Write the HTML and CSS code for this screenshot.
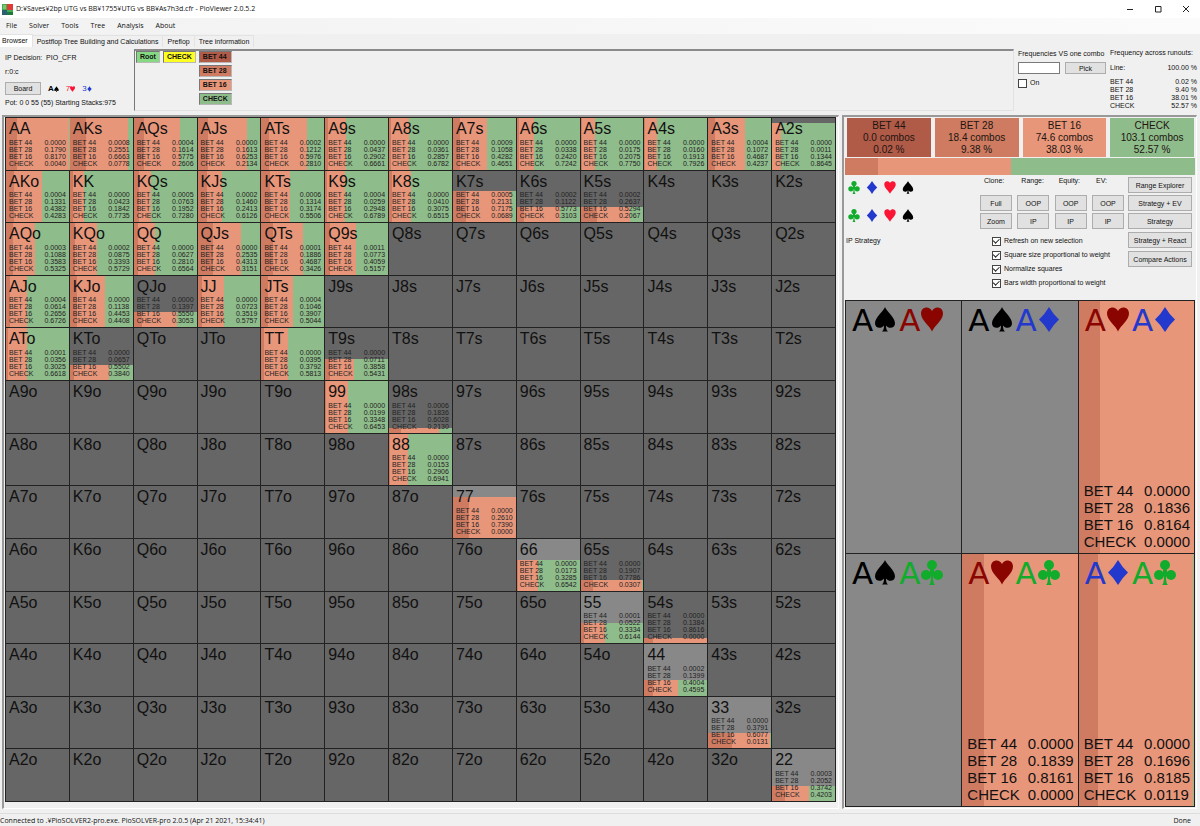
FILE: index.html
```html
<!DOCTYPE html>
<html lang="en">
<head>
<meta charset="utf-8">
<title>PioViewer 2.0.5.2</title>
<link rel="stylesheet" href="styles.css">
</head>
<body>
<svg class="defs" aria-hidden="true">
  <symbol id="spade" viewBox="0 0 22 25"><path d="M11 0C12 4 21 10 21 16.500C21 21 15 22.500 12 18.500C12 21.500 12.500 23.500 14 24.500H8C9.500 23.500 10 21.500 10 18.500C7 22.500 1 21 1 16.500C1 10 10 4 11 0Z"/></symbol>
  <symbol id="heart" viewBox="0 0 22 25"><path d="M11 24.500C9 19 0 13.500 0 6.500C0 -.5 8.500 -1.500 11 4C13.500 -1.500 22 -.5 22 6.500C22 13.500 13 19 11 24.500Z"/></symbol>
  <symbol id="diamond" viewBox="0 0 22 25"><path d="M11 0Q15 7 21 12.500Q15 18 11 25Q7 18 1 12.500Q7 7 11 0Z"/></symbol>
  <symbol id="club" viewBox="0 0 22 25"><circle cx="11" cy="5" r="5"/><circle cx="5" cy="15" r="5"/><circle cx="17" cy="15" r="5"/><path d="M9 8H13L13 13L17 14V17L12 16C12 21 12.500 24 14 25H8C9.500 24 10 21 10 16L5 17V14L9 13Z"/></symbol>
</svg>

<header class="titlebar">
  <svg class="logo" viewBox="0 0 11 11"><path fill="#3fae52" d="M0 0h11v11H0z"/><path fill="#e23b35" d="M5 0h6v6H5z"/><path fill="#2c5f74" d="M0 6h5v5H0z"/><path fill="#7fc46a" d="M1 1h3v4H1z"/><path fill="#1e7a3a" d="M5 8h6v3H5z"/></svg>
  <span class="title">D:¥Saves¥2bp UTG vs BB¥1755¥UTG vs BB¥As7h3d.cfr - PioViewer 2.0.5.2</span>
  <button class="winbtn" aria-label="Minimize"><svg viewBox="0 0 8 8"><path d="M1 4.500H7"/></svg></button>
  <button class="winbtn" aria-label="Maximize"><svg viewBox="0 0 8 8"><path d="M1.500 1.500H7V7H1.500Z"/></svg></button>
  <button class="winbtn" aria-label="Close"><svg viewBox="0 0 8 8"><path d="M1 1L7 7M7 1L1 7"/></svg></button>
</header>

<nav class="menu">
  <button>File</button><button>Solver</button><button>Tools</button><button>Tree</button><button>Analysis</button><button>About</button>
</nav>

<div class="tabs" role="tablist">
  <button role="tab" class="tab active" aria-selected="true">Browser</button>
  <button role="tab" class="tab">Postflop Tree Building and Calculations</button>
  <button role="tab" class="tab">Preflop</button>
  <button role="tab" class="tab">Tree information</button>
</div>

<section class="top">
  <div class="info">
    <p>IP Decision: &nbsp;PIO_CFR</p>
    <p>r:0:c</p>
    <div class="boardrow">
      <button class="btn board">Board</button>
      <span class="bcard black">A<svg><use href="#spade"/></svg></span>
      <span class="bcard red">7<svg><use href="#heart"/></svg></span>
      <span class="bcard blue">3<svg><use href="#diamond"/></svg></span>
    </div>
    <p>Pot: 0 0 55 (55) Starting Stacks:975</p>
  </div>
  <div class="tree">
    <div class="level"><button class="node root">Root</button></div>
    <div class="level"><button class="node current">CHECK</button></div>
    <div class="level">
      <button class="node bet44">BET 44</button>
      <button class="node bet28">BET 28</button>
      <button class="node bet16">BET 16</button>
      <button class="node check">CHECK</button>
    </div>
  </div>
  <div class="combo">
    <label for="combo">Frequencies VS one combo</label>
    <div class="comborow"><input id="combo" type="text"><button class="btn">Pick</button></div>
    <label class="tick"><input type="checkbox">On</label>
  </div>
  <div class="runouts">
    <p>Frequency across runouts:</p>
    <dl class="line"><dt>Line:</dt><dd>100.00 %</dd></dl>
    <dl><dt>BET 44</dt><dd>0.02 %</dd><dt>BET 28</dt><dd>9.40 %</dd><dt>BET 16</dt><dd>38.01 %</dd><dt>CHECK</dt><dd>52.57 %</dd></dl>
  </div>
</section>

<main class="main">
  <section class="panel rangepanel"><div class="range" id="range"></div></section>
  <section class="panel side">
    <div class="actions">
      <button class="bet44">BET 44<br>0.0 combos<br>0.02 %</button>
      <button class="bet28">BET 28<br>18.4 combos<br>9.38 %</button>
      <button class="bet16">BET 16<br>74.6 combos<br>38.03 %</button>
      <button class="check">CHECK<br>103.1 combos<br>52.57 %</button>
    </div>
    <div class="total"><i class="bet28" style="width:9.4%"></i><i class="bet16" style="width:38%"></i><i class="check" style="width:52.6%"></i></div>
    <div class="controls">
      <div class="filters">
        <div class="suits"><svg class="green"><use href="#club"/></svg><svg class="blue"><use href="#diamond"/></svg><svg class="red"><use href="#heart"/></svg><svg class="black"><use href="#spade"/></svg></div>
        <div class="suits"><svg class="green"><use href="#club"/></svg><svg class="blue"><use href="#diamond"/></svg><svg class="red"><use href="#heart"/></svg><svg class="black"><use href="#spade"/></svg></div>
        <p>IP Strategy</p>
      </div>
      <div class="middle">
        <div class="pairs">
          <span>Clone:</span><span>Range:</span><span>Equity:</span><span>EV:</span>
          <button class="btn">Full</button><button class="btn">OOP</button><button class="btn">OOP</button><button class="btn">OOP</button>
          <button class="btn">Zoom</button><button class="btn">IP</button><button class="btn">IP</button><button class="btn">IP</button>
        </div>
        <div class="options">
          <label class="tick"><input type="checkbox" checked>Refresh on new selection</label>
          <label class="tick"><input type="checkbox" checked>Square size proportional to weight</label>
          <label class="tick"><input type="checkbox" checked>Normalize squares</label>
          <label class="tick"><input type="checkbox" checked>Bars width proportional to weight</label>
        </div>
      </div>
      <div class="views">
        <button class="btn">Range Explorer</button>
        <button class="btn">Strategy + EV</button>
        <button class="btn">Strategy</button>
        <button class="btn gap">Strategy + React</button>
        <button class="btn gap">Compare Actions</button>
      </div>
    </div>
    <div class="combos" id="combos"></div>
  </section>
</main>

<footer class="status"><span>Connected to .¥PioSOLVER2-pro.exe. PioSOLVER-pro 2.0.5 (Apr 21 2021, 15:34:41)</span><span>Done</span></footer>
<script src="app.js"></script>
</body>
</html>
```
FILE: styles.css
```css
* { box-sizing: border-box; }
body {
  margin: 0; min-height: 100vh; display: flex; flex-direction: column;
  background: #f0f0f0; color: #111; font: 7px/10px "Liberation Sans", Arial, sans-serif;
}
button, input { font: inherit; color: inherit; margin: 0; padding: 0; border: 0; background: none; }
p, dl, dd { margin: 0; }
.defs { position: absolute; width: 0; height: 0; }
svg { fill: currentColor; }

.bet44 { background: #b05a48; }
.bet28 { background: #ce7b62; }
.bet16 { background: #e8967a; }
.check { background: #8fbc8b; }
.green { color: #12ac2c; }
.blue { color: #2338cc; }
.red { color: #fb1433; }
.black { color: #000; }
.darkred { color: #8b0500; }

.titlebar { display: flex; align-items: center; height: 18px; background: #fff; padding-left: 2px; font-family: "Open Sans", sans-serif; }
.logo { width: 11px; height: 11px; margin-right: 3px; }
.title { flex: 1; }
.winbtn { width: 28px; height: 18px; }
.winbtn svg { width: 8px; height: 8px; display: block; margin: 0 auto; fill: none; stroke: #222; }
.menu { display: flex; gap: 12px; height: 16px; padding-left: 6px; background: linear-gradient(90deg, #f2f2f2, #fbfbfb); font-family: "Open Sans", sans-serif; }
.tabs { display: flex; height: 13px; align-items: flex-end; }
.tab { height: 12px; padding: 0 4px; border: 1px solid #e3e3e3; border-width: 1px 1px 0 0; }
.tab.active { height: 13px; background: #fff; padding: 0 4px 0 2px; }

.btn { border: 1px solid #adadad; background: #e1e1e1; text-align: center; line-height: 9px; }
.tick { display: flex; align-items: center; gap: 3px; }
.tick input { appearance: none; width: 9px; height: 9px; border: 1px solid #444; background: #fff; display: grid; place-items: center; }
.tick input:checked::after { content: ""; width: 5px; height: 3px; border: solid #222; border-width: 0 0 1px 1px; transform: rotate(-45deg) translate(0, -1px); }

.top { display: flex; padding: 2px 3px 0 0; min-height: 68px; }
.info { width: 134px; padding: 4px 0 0 5px; }
.info p { margin-bottom: 4px; white-space: nowrap; }
.boardrow { display: flex; align-items: center; gap: 7px; margin: 5px 0 3px; }
.board { width: 36px; height: 13px; }
.bcard { display: flex; align-items: center; font-size: 8px; }
.bcard.black { font-weight: bold; }
.bcard svg { width: 5px; height: 6px; }
.tree { flex: 1; display: flex; gap: 3px; height: 62px; padding: 0 1px; border: 1px solid #e2e2e2; border-top: 2px solid #8a8a8a; border-left: 1px solid #777; }
.level { display: flex; flex-direction: column; gap: 2px; align-items: stretch; }
.node { height: 12px; padding: 0 3px; border: 1px solid #b8b8b8; border-top-color: #777; border-left-color: #777; font-weight: bold; text-align: left; line-height: 10px; }
.root { background: #86d983; }
.current { background: #ff2; }
.combo { width: 96px; padding: 0 0 0 4px; white-space: nowrap; }
.comborow { display: flex; gap: 5px; margin: 3px 0 4px; }
.comborow input { width: 42px; height: 12px; border: 1px solid #7a7a7a; background: #fff; }
.comborow .btn { width: 41px; height: 12px; }
.runouts { width: 87px; white-space: nowrap; margin-top: -1px; }
.runouts dl { display: grid; grid-template-columns: 1fr auto; line-height: 8px; }
.runouts dd { text-align: right; }
.runouts .line { margin: 6px 0; }

.main { flex: 1; display: grid; grid-template-columns: minmax(0, 837fr) minmax(0, 355fr); gap: 3px; padding: 0 3px 0 2px; }
.panel { border: 1px solid #fff; border-top: 2px solid #999; border-left: 2px solid #999; }
.rangepanel { display: flex; padding: 0 2px 6px 1px; }
.side { display: flex; flex-direction: column; padding: 1px 0 1px 1px; }

.range { flex: 1; display: grid; grid-template-columns: repeat(13, minmax(0, 1fr)); grid-auto-rows: minmax(0, 1fr); border: 1px solid #222; border-width: 1px 0 0 1px; }
.hand { display: grid; background: #666; border: 1px solid #222; border-width: 0 1px 1px 0; min-height: 0; }
.hand > * { grid-area: 1 / 1; }
.hand.pair, .cardcell { background: #888; }
.bars { display: flex; align-self: end; min-width: 0; }
.bars i { display: block; }
.handtext { display: flex; flex-direction: column; justify-content: space-between; padding: 2px 3px 3px 3px; min-width: 0; }
.name { font-size: 16px; line-height: 17px; }
.freqs { display: grid; grid-template-columns: 1fr auto; line-height: 7px; white-space: nowrap; color: #222; }

.actions { display: grid; grid-template-columns: repeat(4, 1fr); gap: 4px; padding: 0 2px; }
.actions button { height: 39px; font-size: 10px; line-height: 12px; color: #201510; }
.total { display: flex; height: 17px; margin: 1px 1px 0 0; }
.controls { display: flex; gap: 4px; height: 125px; padding: 2px 4px 0 1px; }
.filters { flex: 1; }
.suits { display: flex; gap: 6px; padding: 4px 0 0 2px; margin-bottom: 11px; }
.suits svg { width: 12px; height: 13px; }
.filters p { margin-top: 14px; }
.middle { width: 144px; }
.pairs { display: grid; grid-template-columns: repeat(4, 32px); justify-content: space-between; gap: 2px 0; }
.pairs span { height: 16px; padding-left: 4px; line-height: 8px; }
.pairs .btn, .views .btn { height: 16px; }
.options { display: grid; gap: 4px; padding: 7px 0 0 12px; white-space: nowrap; }
.views { width: 64px; display: flex; flex-direction: column; gap: 2px; }
.views .gap { margin-top: 1px; }
.combos { flex: 1; display: grid; grid-template-columns: repeat(3, 1fr); grid-template-rows: repeat(2, 1fr); border: 1px solid #222; border-width: 1px 0 0 1px; margin-right: 1px; }
.cardcell { display: grid; border: 1px solid #222; border-width: 0 1px 1px 0; }
.cardcell > * { grid-area: 1 / 1; }
.cardtext { display: flex; flex-direction: column; justify-content: space-between; padding: 3px 4px 3px 5px; }
.cards { display: flex; gap: 3px; padding-left: 1px; font: 31px/32px "DejaVu Sans", sans-serif; }
.cards span { display: flex; align-items: center; gap: 1px; }
.cards svg { width: 22px; height: 25px; margin-bottom: 2px; }
.cardtext .freqs { font-size: 15px; line-height: 17px; color: #111; }

.status { display: flex; justify-content: space-between; height: 13px; margin-top: 4px; padding: 2px 9px 0 0; border-top: 1px solid #ddd; font-family: "Open Sans", sans-serif; }
```
FILE: app.js
```js
const ranks = "AKQJT98765432";
const classes = ["bet44", "bet28", "bet16", "check"];
const labels = ["BET 44", "BET 28", "BET 16", "CHECK"];

// hand: [BET 44, BET 28, BET 16, CHECK, weight]; frequencies are in ten-thousandths
const data = {
  AA: [0, 1790, 8170, 40], AKs: [8, 2551, 6663, 778], AQs: [4, 1614, 5775, 2606], AJs: [0, 1613, 6253, 2134],
  ATs: [2, 1212, 5976, 2810], A9s: [0, 437, 2902, 6661], A8s: [0, 361, 2857, 6782], A7s: [9, 1058, 4282, 4651],
  A6s: [0, 338, 2420, 7242], A5s: [0, 175, 2075, 7750], A4s: [0, 160, 1913, 7926], A3s: [4, 1072, 4687, 4237],
  A2s: [0, 11, 1344, 8645, 0.9],
  AKo: [4, 1331, 4382, 4283], KK: [0, 423, 1842, 7735], KQs: [5, 763, 1952, 7280], KJs: [2, 1460, 2413, 6126],
  KTs: [6, 1314, 3174, 5506], K9s: [4, 259, 2948, 6789], K8s: [0, 410, 3075, 6515], K7s: [5, 2131, 7175, 689, 0.6],
  K6s: [2, 1122, 5773, 3103, 0.3], K5s: [2, 2637, 5294, 2067, 0.3],
  AQo: [3, 1088, 3583, 5325], KQo: [2, 875, 3393, 5729], QQ: [0, 627, 2810, 6564], QJs: [0, 2535, 4313, 3151],
  QTs: [1, 1886, 4687, 3426], Q9s: [11, 773, 4059, 5157],
  AJo: [4, 614, 2656, 6726], KJo: [0, 1138, 4453, 4408], QJo: [0, 1397, 5550, 3053, 0.3], JJ: [0, 723, 3519, 5757],
  JTs: [4, 1046, 3907, 5044],
  ATo: [1, 356, 3025, 6618], KTo: [0, 657, 5502, 3840, 0.3], TT: [0, 395, 3792, 5813], T9s: [0, 711, 3858, 5431, 0.4],
  "99": [0, 199, 3348, 6453], "98s": [6, 1836, 6028, 2130, 0.1], "88": [0, 153, 2906, 6941],
  "77": [0, 2610, 7390, 0, 0.8], "66": [0, 173, 3285, 6542, 0.6], "65s": [0, 1907, 7786, 307, 0.2],
  "55": [1, 522, 3334, 6144, 0.4], "54s": [0, 1384, 8616, 0, 0.1], "44": [2, 1399, 4004, 4595, 0.3],
  "33": [0, 3791, 6077, 131, 0.3], "22": [3, 2052, 3742, 4203, 0.3]
};

const bars = (f) => `<div class="bars" style="height:${(f[4] || 1) * 100}%">` +
  classes.map((c, i) => `<i class="${c}" style="width:${f[i] / 100}%"></i>`).join("") + "</div>";
const freqs = (f) => `<div class="freqs">` +
  labels.map((l, i) => `<span>${l}</span><span>${(f[i] / 10000).toFixed(4)}</span>`).join("") + "</div>";

let html = "";
for (let r = 0; r < 13; r++) {
  for (let c = 0; c < 13; c++) {
    const name = r === c ? ranks[r] + ranks[c] : r < c ? ranks[r] + ranks[c] + "s" : ranks[c] + ranks[r] + "o";
    const f = data[name];
    html += `<div class="hand${r === c ? " pair" : ""}">${f ? bars(f) : ""}` +
      `<div class="handtext"><span class="name">${name}</span>${f ? freqs(f) : ""}</div></div>`;
  }
}
document.getElementById("range").innerHTML = html;

const colours = { spade: "black", heart: "darkred", diamond: "blue", club: "green" };
const combos = [
  ["spade", "heart"], ["spade", "diamond"], ["heart", "diamond", [0, 1836, 8164, 0]],
  ["spade", "club"], ["heart", "club", [0, 1839, 8161, 0]], ["diamond", "club", [0, 1696, 8185, 119]]
];
const card = (s) => `<span class="${colours[s]}">A<svg><use href="#${s}"/></svg></span>`;
document.getElementById("combos").innerHTML = combos.map(([a, b, f]) =>
  `<div class="cardcell">${f ? bars(f) : ""}<div class="cardtext"><div class="cards">${card(a)}${card(b)}</div>${f ? freqs(f) : ""}</div></div>`
).join("");
```
